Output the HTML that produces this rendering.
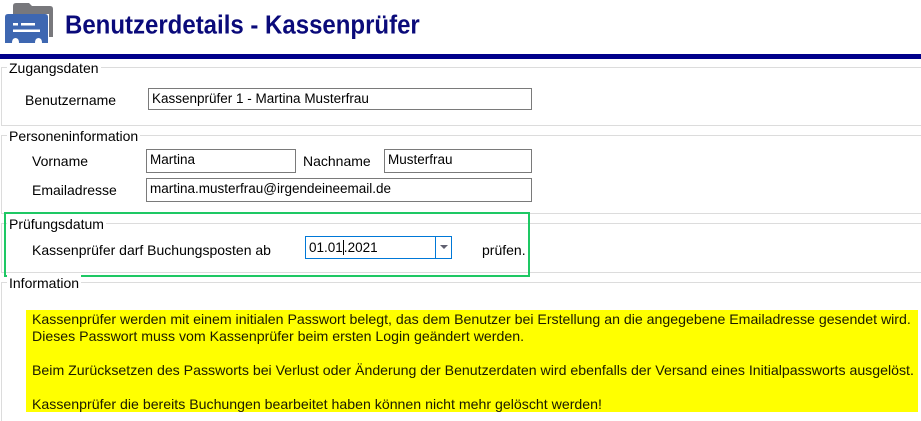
<!DOCTYPE html>
<html><head><meta charset="utf-8"><style>
body{margin:0;width:921px;height:421px;background:#fff;position:relative;overflow:hidden;font-family:"Liberation Sans",sans-serif;font-size:14px;color:#000}
.a{position:absolute;white-space:nowrap}
.hl{position:absolute;left:1px;right:0;height:1px;background:#dcdcdc}
.vl{position:absolute;left:1px;width:1px;background:#dcdcdc}
.leg{position:absolute;background:#fff;padding:0 2px;left:7px;font-size:14px}
.in{position:absolute;border:1px solid #7a7a7a;box-sizing:border-box;padding:2px 3px 0 3px;font-size:13.5px;line-height:16px}
</style></head><body>
<svg class="a" style="left:3px;top:1px" width="52" height="44" viewBox="0 0 52 44">
<path d="M10 13 V5 Q10 2 13 2 H26 L29 5 H47 Q50 5 50 8 V36 H46 V13 Z" fill="#78787c"/>
<path d="M2 16 Q2 13 5 13 H42 Q45 13 45 16 V42 H39 Q39 37 35.5 37 Q32 37 32 42 H16 Q16 37 12.5 37 Q9 37 9 42 H2 Z" fill="#3e67b1"/>
<rect x="10" y="22" width="5" height="2.5" fill="#fff"/><rect x="18" y="22" width="14" height="2.5" fill="#fff"/>
<rect x="10" y="28.5" width="27" height="2.5" fill="#fff"/>
</svg>
<div class="a" style="left:65px;top:11px;font-size:24px;font-weight:bold;color:#0a0a7a;transform:scaleY(1.08);transform-origin:0 0">Benutzerdetails - Kassenprüfer</div>
<div class="a" style="left:0;top:54px;width:921px;height:5px;background:#00008b"></div>

<div class="hl" style="top:67px"></div><div class="vl" style="top:67px;height:58px"></div><div class="hl" style="top:125px"></div>
<div class="leg" style="top:60px">Zugangsdaten</div>
<div class="a" style="left:25px;top:92px">Benutzername</div>
<div class="in" style="left:148px;top:88px;width:384px;height:22px">Kassenprüfer 1 - Martina Musterfrau</div>

<div class="hl" style="top:135px"></div><div class="vl" style="top:135px;height:78px"></div><div class="hl" style="top:213px"></div>
<div class="leg" style="top:128px">Personeninformation</div>
<div class="a" style="left:32px;top:153px">Vorname</div>
<div class="in" style="left:146px;top:149px;width:150px;height:24px">Martina</div>
<div class="a" style="left:303px;top:153px">Nachname</div>
<div class="in" style="left:384px;top:149px;width:148px;height:24px">Musterfrau</div>
<div class="a" style="left:32px;top:182px">Emailadresse</div>
<div class="in" style="left:146px;top:178px;width:386px;height:24px">martina.musterfrau@irgendeineemail.de</div>

<div class="hl" style="top:223px"></div><div class="vl" style="top:223px;height:49px"></div><div class="hl" style="top:272px"></div>
<div class="leg" style="top:216px">Prüfungsdatum</div>
<div class="a" style="left:32px;top:242px">Kassenprüfer darf Buchungsposten ab</div>
<div class="in" style="left:305px;top:236px;width:147px;height:23px;border-color:#0078d7;padding-top:3px">01.01<span style="border-left:1px solid #000">.</span>2021</div>
<div class="a" style="left:435px;top:237px;width:1px;height:21px;background:#0078d7"></div>
<div class="a" style="left:440px;top:245px;width:0;height:0;border-left:4px solid transparent;border-right:4px solid transparent;border-top:4px solid #606070"></div>
<div class="a" style="left:482px;top:242px">prüfen.</div>
<div class="a" style="left:4px;top:212px;width:522px;height:61px;border:2px solid #1ec864"></div>

<div class="hl" style="top:282px"></div><div class="vl" style="top:282px;height:139px"></div>
<div class="leg" style="top:275px">Information</div>
<div class="a" style="left:26px;top:310px;width:892px;height:102px;background:#ffff00"></div>
<div class="a" style="left:32px;top:311px;line-height:17px;font-size:14.15px;color:#1a1a00">Kassenprüfer werden mit einem initialen Passwort belegt, das dem Benutzer bei Erstellung an die angegebene Emailadresse gesendet wird.<br>Dieses Passwort muss vom Kassenprüfer beim ersten Login geändert werden.<br><br>Beim Zurücksetzen des Passworts bei Verlust oder Änderung der Benutzerdaten wird ebenfalls der Versand eines Initialpassworts ausgelöst.<br><br>Kassenprüfer die bereits Buchungen bearbeitet haben können nicht mehr gelöscht werden!</div>
</body></html>
